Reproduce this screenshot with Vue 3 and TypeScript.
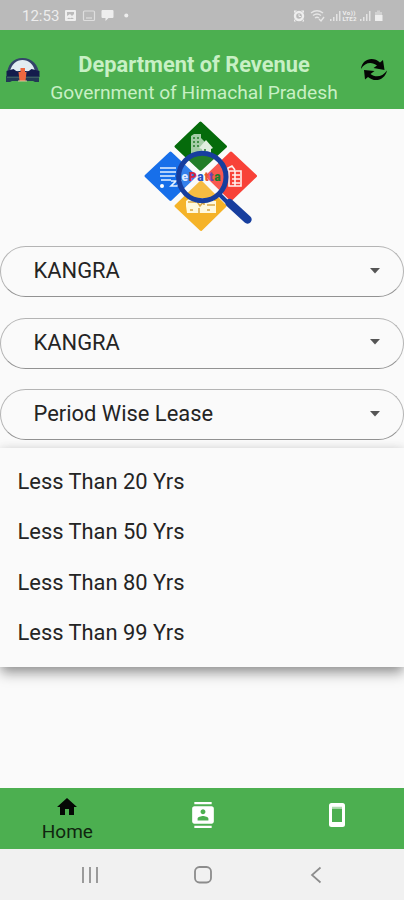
<script setup lang="ts">
import { ref } from 'vue'

interface SelectField {
  id: string
  value: string
}

const fields = ref<SelectField[]>([
  { id: 'district', value: 'KANGRA' },
  { id: 'tehsil', value: 'KANGRA' },
  { id: 'report', value: 'Period Wise Lease' },
])

const options: string[] = ['Less Than 20 Yrs', 'Less Than 50 Yrs', 'Less Than 80 Yrs', 'Less Than 99 Yrs']
</script>

<template>
  <div class="screen">
    <div class="status">
      <span class="clock">12:53</span>
      <svg class="status-left" width="68" height="16" viewBox="0 0 68 16" fill="#eeeeee">
        <path fill-rule="evenodd" d="M2 2h9q1 0 1 1v9q0 1-1 1H2q-1 0-1-1V3q0-1 1-1zm1 2v4l3-2 2 2 2-2V4zm0 7h7L8 9.500l-2 1-1-1z" />
        <g fill="none" stroke="#dedede" stroke-width="1.200"><rect x="19.500" y="3" width="11" height="9.500" rx="1" /><path d="M22 10h6" /></g>
        <path d="M38.500 2h10q1 0 1 1v6q0 1-1 1h-4l-3 3v-3h-3q-1 0-1-1V3q0-1 1-1z" />
        <circle cx="62.300" cy="7.500" r="2" />
      </svg>
      <svg class="status-right" width="94" height="16" viewBox="0 0 94 16" fill="#eeeeee">
        <circle cx="8" cy="8" r="4" fill="none" stroke="#eeeeee" stroke-width="2.400" />
        <path d="M3 5V2.500h3zM10 2.500h3V5zM3 11v2.500h2zM13 11v2.500h-2z" />
        <path d="M8 6v2.500h2" fill="none" stroke="#eeeeee" />
        <g fill="none" stroke="#e6e6e6" stroke-width="1.400"><path d="M20 5q6-4.500 12 0M22 7.500q4-3 8 0M24 10q2-1.500 4 0" /><path d="M28 11l2 2 3-4" /></g>
        <path d="M39 11h1.500v2H39zM42 9h1.500v4H42zM45 6h1.500v7H45zM48 3h1.500v10H48z" opacity=".8" />
        <text class="volte" x="51.500" y="7" textLength="13">Vo))</text>
        <text class="volte" x="51.500" y="13.300" textLength="14">LTE2</text>
        <path d="M69 11h1.500v2H69zM72 9h1.500v4H72zM75 6h1.500v7H75zM78 3h1.500v10H78z" opacity=".8" />
        <path d="M86 2.500h3V4h2v9h-7V4h2z" opacity=".45" />
        <path d="M84 7h7.500v6H84z" />
      </svg>
    </div>

    <header class="header">
      <svg class="emblem" width="36" height="28" viewBox="0 0 36 28">
        <path d="M2 19C2 9 8 2 17.500 2S34 9 34 19z" fill="#34446a" />
        <path d="M5 15C7 8 11 4 17.500 4S28 8 30 15z" fill="#e2edf2" />
        <path d="M1.500 15l7-2 4 3 5-2 5 2 4-3 8 2v6h-33z" fill="#141c4c" />
        <path d="M1 20h33v6h-4l-2-1H7l-2 1H1z" fill="#223955" />
        <path d="M2 21.500h32" stroke="#426568" stroke-width=".8" />
        <path d="M15.500 12h4.500v4h1.500l-1 9h-6l-1-9h2z" fill="#ed6840" />
        <path d="M13 25h9" stroke="#d8c8a0" stroke-width="1" />
      </svg>
      <div class="titles">
        <h1>Department of Revenue</h1>
        <p>Government of Himachal Pradesh</p>
      </div>
      <svg class="refresh" width="28" height="26" viewBox="0 0 28 26" fill="#050505">
        <path d="M1 12C2 2 13-1 20 5.500l3-2.500 1.500 10-11-2 3.500-2.500C12 4.500 5 5 1 12z" />
        <path d="M27 13.500c-2 9.500-12 12.500-19 6.500l-3 2.500L4 13l10.500 1-4 3c5 4 12 3 16.500-3.500z" />
      </svg>
    </header>

    <main class="content">
      <svg class="logo" width="122" height="120" viewBox="141 116 122 120">
        <g stroke-linejoin="round" stroke-width="3">
          <path d="M200.500 123L225.500 146.500 200.500 169.500 176 146.500z" fill="#056b0b" stroke="#056b0b" />
          <path d="M170.500 153L195 176 170.500 199.500 146 176z" fill="#176fea" stroke="#176fea" />
          <path d="M231 153L255.500 176 231 199.500 207 176z" fill="#f84238" stroke="#f84238" />
          <path d="M201 182L225 206 201 229.500 176 206z" fill="#f5b328" stroke="#f5b328" />
        </g>
        <g fill="#a5cda7"><path d="M191 136l3-2h7v4l4 4v12h-14z" /><path d="M199 148l7-8 7 8-2 1v5h-9v-5z" fill="#e0eee0" /><path d="M193 138h2m2 0h2m-6 4h2m2 0h2m-6 4h2m2 0h2m5 4h2" stroke="#237c2a" stroke-width="1.500" /></g>
        <g fill="none" stroke="#e5f1ff" stroke-width="1.600"><path d="M160 168h16M160 172h16M160 176h15M161 180h10M171 181h5l-5 5h6l4-6" /></g>
        <circle cx="162" cy="186" r="2" fill="#fff" />
        <g fill="none" stroke="#fff3ef" stroke-width="1.600"><path d="M228 171v-3l4-2 3 4M229 171h12v15h-12zM232 175h8m-8 4h8m-8 4h8M235 171v15" /></g>
        <path d="M186 206v-5l4-3h24v3h2v12h-29z" fill="#fff9de" />
        <path d="M188 202h8m3 6v5m5-13v5m3 0h8m-25 5h3m14 0h3M196 200l4 6 5-6" fill="none" stroke="#d8a746" stroke-width="1.500" />
        <circle cx="202.300" cy="177" r="22.500" fill="#fff" fill-opacity=".12" />
        <text class="brand" x="181.500" y="181" textLength="39"><tspan fill="#dce9ff">e</tspan><tspan fill="#d12643">P</tspan><tspan fill="#2750c0">a</tspan><tspan fill="#e65831">t</tspan><tspan fill="#6845b0">t</tspan><tspan fill="#16802a">a</tspan></text>
        <circle cx="202.300" cy="177" r="23.700" fill="none" stroke="#173e9e" stroke-width="5" />
        <path d="M219 194l8 8" stroke="#173e9e" stroke-width="4" />
        <path d="M229.500 203l18 16.500" stroke="#173e9e" stroke-width="8.400" stroke-linecap="round" />
      </svg>

      <div class="fields">
        <div v-for="field in fields" :key="field.id" class="select">
          <span>{{ field.value }}</span>
          <svg width="10" height="6" viewBox="0 0 10 6"><path d="M0 0h10L5 5.500z" fill="#555" /></svg>
        </div>
      </div>

      <ul class="menu">
        <li v-for="option in options" :key="option">{{ option }}</li>
      </ul>
    </main>

    <nav class="tabs">
      <a class="tab active">
        <svg width="24" height="24" viewBox="0 0 24 24" fill="#050805"><path d="M10 20v-6h4v6h5v-8h3L12 3 2 12h3v8z" /></svg>
        <span>Home</span>
      </a>
      <a class="tab contact">
        <svg width="26" height="26" viewBox="0 0 24 24" fill="#fff"><path d="M20 0H4v2h16V0zM4 24h16v-2H4v2zM20 4H4c-1.100 0-2 .9-2 2v12c0 1.100.9 2 2 2h16c1.100 0 2-.9 2-2V6c0-1.100-.9-2-2-2zm-8 2.750c1.240 0 2.250 1.010 2.250 2.250s-1.010 2.250-2.250 2.250S9.750 10.240 9.750 9 10.760 6.750 12 6.750zM17 17H7v-1.500c0-1.670 3.330-2.500 5-2.500s5 .83 5 2.500V17z" /></svg>
      </a>
      <a class="tab">
        <svg width="18" height="26" viewBox="0 0 18 26"><rect x="1" y="1" width="16" height="24" rx="2.500" fill="#fff" /><rect x="4" y="6.500" width="10" height="13.500" fill="#4caf50" /><path d="M4 5.300h10" stroke="#9bd29d" stroke-width="1" /></svg>
      </a>
    </nav>

    <div class="system">
      <svg width="18" height="18" viewBox="0 0 18 18"><path d="M2 1v16M9 1v16M16 1v16" stroke="#8c8c8c" stroke-width="1.700" /></svg>
      <svg width="20" height="20" viewBox="0 0 20 20"><rect x="2" y="2" width="16" height="15.500" rx="4.500" fill="none" stroke="#8c8c8c" stroke-width="1.800" /></svg>
      <svg width="12" height="18" viewBox="0 0 12 18"><path d="M10.500 1.500L2 9l8.500 7.500" fill="none" stroke="#8c8c8c" stroke-width="1.700" /></svg>
    </div>
  </div>
</template>

<style>
body {
  margin: 0;
  background: #fafafa;
}
</style>

<style scoped>
.screen {
  display: flex;
  flex-direction: column;
  width: 404px;
  height: 900px;
  overflow: hidden;
  background: #fafafa;
  color: #242424;
  font-family: Roboto, sans-serif;
}
.screen svg {
  display: block;
  flex: none;
}
.status {
  display: flex;
  align-items: center;
  height: 30px;
  padding: 2px 19px 0 22px;
  box-sizing: border-box;
  background: #bababa;
}
.clock {
  width: 42px;
  color: #ededed;
  font-size: 15px;
  line-height: 18px;
}
.status-right {
  margin-left: auto;
}
.volte {
  font-size: 6.200px;
  font-weight: 700;
}
.header {
  display: grid;
  grid-template-columns: 36px 1fr 28px;
  align-items: center;
  height: 79px;
  padding: 0 16px 0 5px;
  box-sizing: border-box;
  background: #4caf50;
}
.titles {
  padding: 16px 13px 0 0;
  color: #c8f0c5;
  text-align: center;
  white-space: nowrap;
}
.titles h1 {
  margin: 0;
  font-size: 21.800px;
  font-weight: 700;
  line-height: 29px;
}
.titles p {
  margin: 0;
  font-size: 19.200px;
  line-height: 27px;
}
.content {
  display: flex;
  flex-direction: column;
  height: 679px;
}
.logo {
  margin: 7px auto 10px;
}
.brand {
  font-size: 12px;
  font-weight: 900;
}
.fields {
  display: flex;
  flex-direction: column;
  gap: 20.500px;
}
.select {
  display: flex;
  align-items: center;
  justify-content: space-between;
  height: 51px;
  padding: 0 23px 1.500px 32.500px;
  box-sizing: border-box;
  border: 1.500px solid #b4b4b4;
  border-bottom-color: #929292;
  border-radius: 26px;
  font-size: 21.900px;
}
.menu {
  height: 219px;
  margin: 8px 0 0;
  padding: 8.500px 17.500px 7px;
  box-sizing: border-box;
  background: #fafafa;
  box-shadow: 0 7px 12px -1px rgba(0, 0, 0, .38), 0 0 10px rgba(0, 0, 0, .1);
  list-style: none;
}
.menu li {
  height: 50.600px;
  font-size: 21.900px;
  line-height: 50.600px;
}
.tabs {
  display: grid;
  grid-template-columns: repeat(3, 1fr);
  height: 61px;
  background: #4caf50;
}
.tab {
  display: flex;
  flex-direction: column;
  align-items: center;
  justify-content: center;
  padding-bottom: 7px;
}
.contact {
  padding-left: 2px;
}
.active {
  justify-content: flex-start;
  padding: 7px 0 0;
  color: #10260f;
  font-size: 19px;
  line-height: 25px;
}
.system {
  display: grid;
  grid-template-columns: 18px 20px 12px;
  align-items: center;
  column-gap: 94px;
  height: 51px;
  padding-left: 81px;
  box-sizing: border-box;
  background: #f1f1f1;
}
.system svg:last-child {
  margin-left: 3px;
}
</style>
